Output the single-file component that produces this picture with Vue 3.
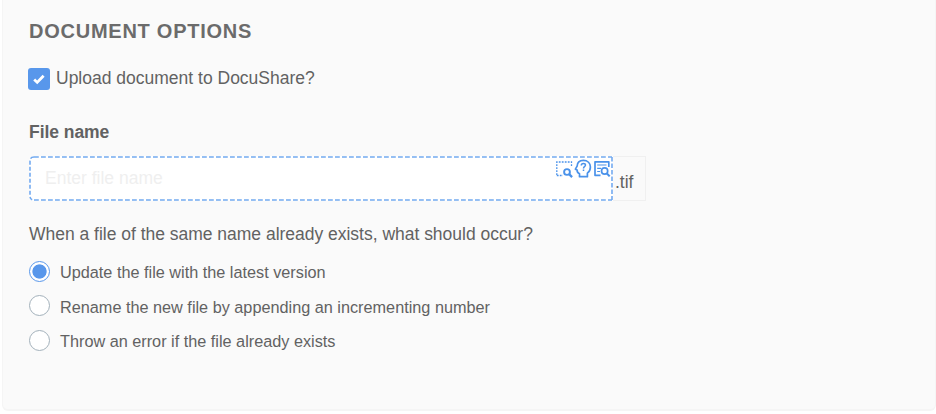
<script setup>
import { ref } from 'vue'

const upload = ref(true)
const fileName = ref('')
const conflict = ref('update')
const choices = [
  { value: 'update', label: 'Update the file with the latest version' },
  { value: 'rename', label: 'Rename the new file by appending an incrementing number' },
  { value: 'error', label: 'Throw an error if the file already exists' },
]
</script>

<template>
  <section class="panel">
    <h2 class="title">DOCUMENT OPTIONS</h2>

    <label class="upload">
      <input v-model="upload" class="native" type="checkbox" />
      <span class="box">
        <svg v-if="upload" width="22" height="22" viewBox="0 0 22 22" fill="none">
          <path d="M6.2 11.6l3 2.8 6.4-6.6" stroke="#fff" stroke-width="2.8" />
        </svg>
      </span>
      <span class="upload-text">Upload document to DocuShare?</span>
    </label>

    <label class="field-label" for="file-name">File name</label>
    <div class="field">
      <div class="entry">
        <svg class="outline" width="584" height="45" viewBox="0 0 584 45" fill="none" stroke="#73aaf0" stroke-width="1.6">
          <path d="M5 1H583M5 44H583" stroke-dasharray="4.8 2.2" />
          <path d="M5 1Q1 1 1 5V40Q1 44 5 44" stroke-dasharray="4 2" />
          <path d="M583 1V44" stroke-dasharray="4.5 2" />
        </svg>
        <div class="entry-row">
          <input id="file-name" v-model="fileName" class="name" type="text" placeholder="Enter file name" />
          <div class="tools">
            <svg width="18" height="20" viewBox="0 0 18 20" fill="none" stroke="#4a92ea">
              <path d="M1.8 17V4H16.5V9M1.8 17.5H8" stroke-width="1.3" stroke-dasharray="1.8 1.2" />
              <circle cx="12" cy="14" r="2.9" stroke-width="1.9" />
              <path d="M14.1 16.1l3 3" stroke-width="2.2" />
            </svg>
            <svg width="18" height="20" viewBox="0 0 18 20" fill="none" stroke="#4a92ea">
              <path d="M5.5 18.7v-3C3.2 14.7 3 13.8 3.1 12L1.4 11.2 3.1 8.2C3.3 4.5 5.7 2.4 9.3 2.4c4.3 0 7.1 2.8 7.1 6.5 0 2.7-1.2 4.9-3 6.2v3.6z" stroke-width="1.7" stroke-linejoin="round" />
              <path d="M7.3 7.4c0-1.3.8-2 2.1-2 1.2 0 2.1.7 2.1 1.7 0 1.6-2 1.6-2 3.3M9.5 11.5v1.5" stroke-width="1.5" />
            </svg>
            <svg width="18" height="20" viewBox="0 0 18 20" fill="none" stroke="#4a92ea">
              <path d="M7.5 17.3H2V3.8H15.8V9" stroke-width="1.7" stroke-linejoin="round" />
              <path d="M4.2 7H13.5M4.2 10.3H8M4.2 13.5H7" stroke-width="1.2" />
              <circle cx="11.6" cy="13" r="3.1" stroke-width="1.7" />
              <path d="M13.7 15.2l3 3.2" stroke-width="2" />
            </svg>
          </div>
        </div>
      </div>
      <span class="suffix">.tif</span>
    </div>

    <p class="question">When a file of the same name already exists, what should occur?</p>
    <div class="choices">
      <label v-for="choice in choices" :key="choice.value" class="choice">
        <input v-model="conflict" class="native" type="radio" name="conflict" :value="choice.value" />
        <span class="dot" :class="{ on: conflict === choice.value }"></span>
        <span class="choice-text">{{ choice.label }}</span>
      </label>
    </div>
  </section>
</template>

<style>
body {
  background: #fff;
}
</style>

<style scoped>
.panel {
  box-sizing: border-box;
  height: 411px;
  margin: 0 0 0 2px;
  padding: 20px 26px 0;
  border: solid #f5f5f5;
  border-width: 0 1px 2px;
  border-radius: 0 0 6px 6px;
  background: #fafafa;
  color: #626262;
  font-family: "Liberation Sans", Arial, sans-serif;
}
.title {
  margin: 0;
  color: #6b6b6b;
  font-size: 20px;
  font-weight: 700;
  line-height: 23px;
  letter-spacing: 0.75px;
}
.native {
  position: absolute;
  opacity: 0;
  margin: 0;
}
.upload {
  display: flex;
  align-items: center;
  height: 22px;
  margin: 25px 0 0 -1px;
  gap: 6px;
  font-size: 17.5px;
}
.box {
  width: 22px;
  height: 22px;
  border-radius: 3px;
  background: #5897eb;
}
.box svg {
  display: block;
}
.upload-text {
  line-height: 22px;
  margin-top: -2px;
}
.field-label {
  display: block;
  margin-top: 32px;
  font-size: 17.5px;
  font-weight: 700;
  line-height: 20px;
  letter-spacing: -0.05px;
}
.field {
  display: flex;
  width: 617px;
  height: 45px;
  margin-top: 14px;
}
.entry {
  display: grid;
  width: 584px;
  height: 45px;
  border-radius: 5px 0 0 5px;
  background: #fff;
}
.outline,
.entry-row {
  grid-area: 1 / 1;
}
.outline {
  display: block;
}
.entry-row {
  z-index: 1;
  display: flex;
  box-sizing: border-box;
  padding: 2px;
}
.name {
  flex: 1;
  min-width: 0;
  padding: 0 0 0 14px;
  border: 0;
  outline: 0;
  background: transparent;
  font: 17.5px "Liberation Sans", Arial, sans-serif;
}
.name::placeholder {
  color: #efefef;
  opacity: 1;
}
.tools {
  display: flex;
  gap: 1px;
}
.tools svg {
  display: block;
}
.suffix {
  box-sizing: border-box;
  width: 33px;
  padding: 15px 0 0 2px;
  border: 1px solid #f0f0f0;
  border-left: 0;
  font-size: 17.5px;
  line-height: 20px;
}
.question {
  margin: 22px 0 0;
  font-size: 17.5px;
  line-height: 22px;
  letter-spacing: -0.015px;
  white-space: nowrap;
}
.choices {
  display: grid;
  gap: 12.5px;
  margin-top: 15px;
}
.choice {
  display: flex;
  align-items: center;
  gap: 10px;
  height: 22px;
}
.dot {
  box-sizing: border-box;
  width: 21px;
  height: 21px;
  border: 1.5px solid #a3b1bb;
  border-radius: 50%;
  background: #fff;
}
.dot.on {
  border-color: #5897eb;
  background: radial-gradient(circle, #5897eb 6.7px, #fff 7.5px);
}
.choice-text {
  font-size: 16.25px;
  line-height: 20px;
  padding-top: 2px;
  white-space: nowrap;
}
</style>
